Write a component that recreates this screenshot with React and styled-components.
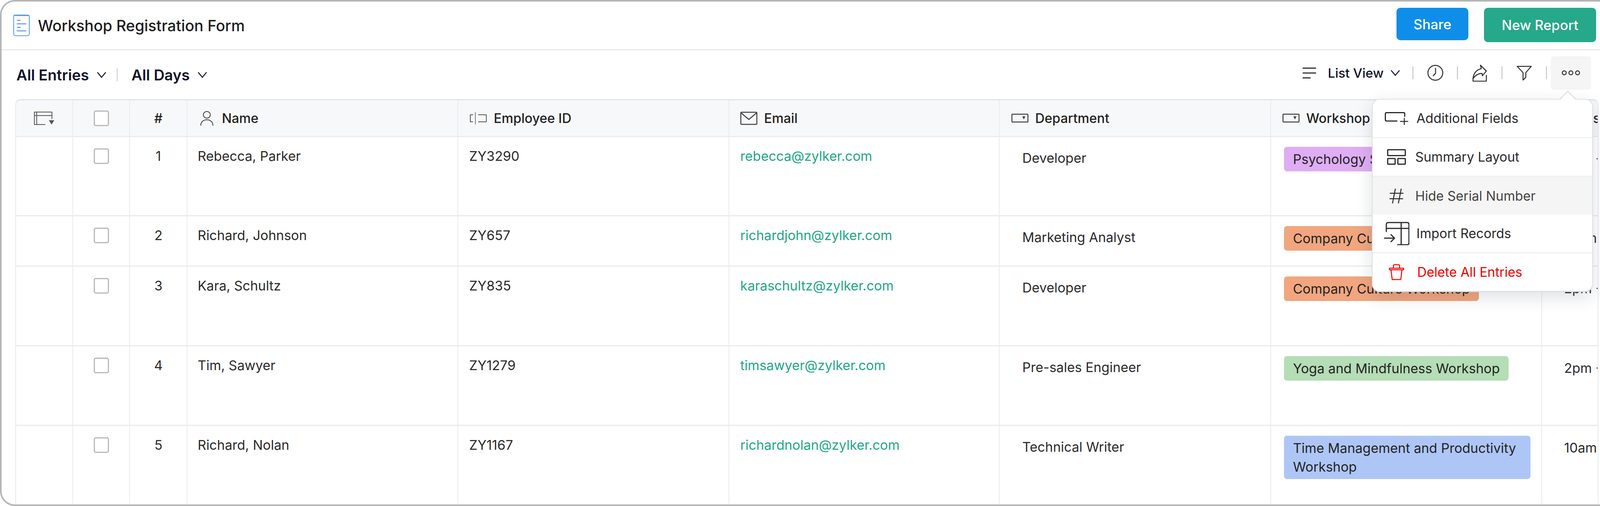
import React from 'react';
import styled, { createGlobalStyle } from 'styled-components';

const GlobalStyle = createGlobalStyle`
  html, body { margin: 0; padding: 0; background: #fff; }
  body { font-family: Inter, "Noto Sans", sans-serif; color: #2b2b2b; }
  * { box-sizing: border-box; }
`;

const Frame = styled.div`
  position: relative;
  display: flex;
  flex-direction: column;
  width: 4132px;
  height: 1296px;
  border: 4px solid #b5b5b5;
  border-radius: 38px;
  background: #fff;
  overflow: hidden;
`;

const TopBar = styled.header`
  display: flex;
  justify-content: space-between;
  flex: 0 0 125px;
  padding: 16px 42px 0 30px;
  border-bottom: 3px solid #e9eaec;
`;

const TitleGroup = styled.div`
  display: flex;
  align-items: center;
  gap: 21px;
  height: 88px;
  padding-top: 2px;
`;

const Title = styled.h1`
  margin: 0;
  font-size: 39px;
  font-weight: 500;
  color: #1e1e1e;
`;

const Actions = styled.div`
  display: flex;
  align-items: flex-start;
  gap: 40px;
`;

const Button = styled.button`
  width: ${({ $width }) => $width}px;
  height: ${({ $height }) => $height}px;
  border: 0;
  border-radius: 10px;
  background: ${({ $color }) => $color};
  color: #fff;
  font-family: inherit;
  font-size: 35px;
  font-weight: 500;
`;

const FilterBar = styled.div`
  display: flex;
  justify-content: space-between;
  align-items: center;
  flex: 0 0 125px;
  padding: 0 55px 0 38px;
`;

const FilterGroup = styled.div`
  display: flex;
  align-items: center;
  height: 34px;
`;

const FilterLabel = styled.span`
  font-size: 38px;
  font-weight: 600;
  color: #10122e;
`;

const FilterDivider = styled.span`
  width: 2px;
  height: 33px;
  margin: 0 36px 0 27px;
  background: #c9c9c9;
`;

const ChevronSvg = styled.svg`
  flex: none;
  margin-left: ${({ $gap }) => $gap}px;
`;

const ToolGroup = styled.div`
  display: flex;
  align-items: center;
  margin-bottom: 10px;
`;

const ViewPicker = styled.div`
  display: flex;
  align-items: center;
  margin-right: 32px;
`;

const ViewLabel = styled.span`
  margin-left: 29px;
  font-size: 33px;
  font-weight: 500;
  color: #10122e;
`;

const ToolSlot = styled.div`
  display: flex;
  align-items: center;
  justify-content: center;
  width: 112px;
`;

const ToolDivider = styled.span`
  flex: none;
  width: 2px;
  height: 33px;
  background: #bdbdbd;
`;

const MoreButton = styled.div`
  display: flex;
  align-items: center;
  justify-content: center;
  width: 103px;
  height: 86px;
  margin-left: 10px;
  border-radius: 8px;
  background: #f5f5f5;
`;

const Table = styled.div`
  flex: 1;
  min-height: 0;
  margin: 0 36px 0 35px;
  border: 2px solid #e7eaee;
  border-top: 3px solid #dfe3e8;
  border-bottom: 0;
  border-radius: 14px 14px 0 0;
  overflow: hidden;
`;

const Row = styled.div`
  display: grid;
  grid-template-columns: 146px 146px 147px 693px 694px 692px 695px 694px 144px;
  height: ${({ $height }) => $height}px;
  border-bottom: ${({ $last }) => ($last ? 0 : '3px solid #ebebeb')};
  background: ${({ $header }) => ($header ? '#f7f8fa' : '#fff')};
`;

const HeadCell = styled.div`
  display: flex;
  align-items: center;
  justify-content: ${({ $center }) => ($center ? 'center' : 'flex-start')};
  gap: 17px;
  min-width: 0;
  padding-left: ${({ $left }) => $left || 0}px;
  border-right: 2px solid #e9ebee;
  font-size: 33.5px;
  font-weight: 500;
  line-height: 48px;
  color: #222;
  white-space: nowrap;
  overflow: hidden;
  &:last-child { border-right: 0; }
`;

const Cell = styled.div`
  display: flex;
  justify-content: ${({ $center }) => ($center ? 'center' : 'flex-start')};
  min-width: 0;
  padding-top: ${({ $top }) => $top || 25}px;
  padding-left: ${({ $left }) => $left || 0}px;
  padding-right: ${({ $right }) => $right || 0}px;
  border-right: 2px solid #e9ebee;
  font-size: 34px;
  line-height: 48px;
  color: ${({ $color }) => $color || '#2b2b2b'};
  white-space: nowrap;
  overflow: hidden;
  &:last-child { border-right: 0; }
`;

const Checkbox = styled.span`
  width: 39px;
  height: 40px;
  border: 3px solid #b9b9b9;
  border-radius: 5px;
  background: #fff;
`;

const Tag = styled.span`
  display: inline-block;
  align-self: flex-start;
  padding: 7.5px 23px;
  border-radius: 8px;
  background: ${({ $color }) => $color};
  color: #232323;
  white-space: normal;
`;

const Menu = styled.div`
  position: absolute;
  top: 249px;
  left: 3508px;
  display: flex;
  flex-direction: column;
  width: 566px;
  height: 495px;
  border: 2px solid #dde0e5;
  border-bottom-width: 3px;
  border-radius: 20px;
  background: #fff;
  box-shadow: 0 14px 44px rgba(30, 40, 60, 0.14);
  &::before {
    content: '';
    position: absolute;
    top: -16px;
    left: 484px;
    width: 29px;
    height: 29px;
    border-top: 2px solid #d5dae2;
    border-left: 2px solid #d5dae2;
    background: #fff;
    transform: rotate(45deg);
  }
`;

const MenuItem = styled.div`
  display: flex;
  align-items: center;
  flex: 1;
  padding-left: 28px;
  border-bottom: ${({ $divider }) => ($divider ? '3px solid #f0f0f0' : 0)};
  background: ${({ $active }) => ($active ? '#f5f5f5' : 'transparent')};
  color: ${({ $color }) => $color || '#2b2b2b'};
  font-size: 33.5px;
  position: relative;
`;

const MenuIcon = styled.span`
  display: flex;
  justify-content: center;
  flex: none;
  width: 66px;
  margin-right: ${({ $gap }) => $gap}px;
`;

const Icon = ({ width, height, children, stroke = '#3a3a3a', strokeWidth = 2.5 }) => (
  <svg
    width={width}
    height={height}
    viewBox={`0 0 ${width} ${height}`}
    fill="none"
    stroke={stroke}
    strokeWidth={strokeWidth}
    strokeLinecap="round"
    strokeLinejoin="round"
    style={{ flex: 'none', display: 'block' }}
  >
    {children}
  </svg>
);

const Chevron = ({ gap, width = 24, color = '#10122e' }) => (
  <ChevronSvg $gap={gap} width={width} height="16" viewBox="0 0 24 16" fill="none" stroke={color} strokeWidth="2.6" strokeLinecap="round" strokeLinejoin="round">
    <path d="M2 2l10 12L22 2" />
  </ChevronSvg>
);

const FormIcon = () => (
  <Icon width={42} height={56} stroke="#4f9cf0" strokeWidth={2}>
    <rect x="1" y="1.5" width="40" height="53" rx="5" />
    <path d="M2 2.5h38" strokeWidth="3" />
    <path d="M10 15h8M10 33h8" stroke="#3f7fd0" />
    <path d="M10 24h22M10 42h22" stroke="#6ea6e8" strokeWidth="3" />
  </Icon>
);

const ColumnsIcon = () => (
  <Icon width={54} height={36} stroke="#555" strokeWidth={2}>
    <path d="M47 20V2H2v32h28" strokeLinecap="butt" />
    <path d="M2 11h45M8 2v32" strokeLinecap="butt" />
    <path d="M39 23h14l-7 11z" fill="#555" stroke="none" />
  </Icon>
);

const PersonIcon = () => (
  <Icon width={43} height={38} strokeWidth={2}>
    <ellipse cx="21.5" cy="10" rx="9" ry="8.5" />
    <path d="M6 37c0-19 31-19 31 0" />
  </Icon>
);

const IdIcon = () => (
  <Icon width={45} height={32} stroke="#555" strokeWidth={2}>
    <path d="M9 7H2v18h7M22 7h21v18H22" strokeLinecap="butt" />
    <path d="M15 1v30" strokeWidth="1.5" />
  </Icon>
);

const MailIcon = () => (
  <Icon width={44} height={34} stroke="#3f3f3f" strokeWidth={2.5}>
    <rect x="1.5" y="1.5" width="41" height="31" rx="2" />
    <path d="M2 3l20 17L42 3" />
  </Icon>
);

const SelectIcon = () => (
  <Icon width={44} height={23} stroke="#3f3f3f" strokeWidth={2.5}>
    <rect x="1.5" y="1.5" width="41" height="20" rx="1.5" />
    <path d="M28 7h8l-4 8z" fill="#3f3f3f" stroke="none" />
  </Icon>
);

const ListIcon = () => (
  <Icon width={36} height={30} stroke="#333" strokeWidth={3.2}>
    <path d="M2 2.5h32M2 15h32M2 27.5h18" />
  </Icon>
);

const ClockIcon = () => (
  <Icon width={41} height={41} stroke="#2f2f2f">
    <circle cx="20.5" cy="20.5" r="19" />
    <path d="M21 9v13l-6 6" />
  </Icon>
);

const ExportIcon = () => (
  <Icon width={38} height={44} stroke="#2f2f2f">
    <path d="M2 34v9h34V27" strokeLinecap="butt" />
    <path d="M21 2l15 15-10 12-1-6c-10 0-18 6-23 13 1-13 9-23 21-25z" />
  </Icon>
);

const FilterIcon = () => (
  <Icon width={40} height={38} stroke="#2f2f2f">
    <path d="M2 2h36L24 18v12l-7 7V18z" />
  </Icon>
);

const DotsIcon = () => (
  <Icon width={47} height={13} stroke="#2f2f2f">
    <circle cx="6.5" cy="6.5" r="5" />
    <circle cx="23.5" cy="6.5" r="5" />
    <circle cx="40.5" cy="6.5" r="5" />
  </Icon>
);

const AddFieldIcon = () => (
  <Icon width={60} height={33} stroke="#2b2b2b" strokeWidth={3}>
    <path d="M51 11V4q0-2.500-2.500-2.500H5Q1.500 1.500 1.500 5v14.500Q1.500 23 5 23h26" />
    <path d="M50 16v16M40 24h19" strokeWidth="2.500" />
  </Icon>
);

const SummaryIcon = () => (
  <Icon width={48} height={40} stroke="#2b2b2b" strokeWidth={3}>
    <rect x="1.500" y="1.500" width="45" height="15" rx="1" />
    <rect x="1.500" y="24" width="19" height="14.500" rx="1" />
    <rect x="27.500" y="24" width="19" height="14.500" rx="1" />
  </Icon>
);

const HashIcon = () => (
  <Icon width={36} height={38} stroke="#2b2b2b" strokeWidth={2.500}>
    <path d="M15 1L8 37M30 1l-7 36M2 12h33M1 26h33" />
  </Icon>
);

const ImportIcon = () => (
  <Icon width={65} height={60} stroke="#2b2b2b" strokeWidth={3}>
    <path d="M6 25V7q0-5 5-5h48q5 0 5 5v47q0 5-5 5H35" />
    <path d="M6 17h58M44 2v57" />
    <path d="M1 42h26M18 33l9 9-9 9" />
  </Icon>
);

const TrashIcon = () => (
  <Icon width={40} height={42} stroke="#f00000" strokeWidth={2.500}>
    <path d="M2 11h36M2 11v4h36v-4" />
    <path d="M12 10V5q0-3 3-3h10q3 0 3 3v5" />
    <path d="M6 15l3 25h22l3-25" />
  </Icon>
);

const TAG_COLORS = {
  purple: '#dfadf3',
  orange: '#f1a67f',
  green: '#b5ddb6',
  blue: '#aec6f6',
};

const rows = [
  { id: 1, height: 203, name: 'Rebecca, Parker', code: 'ZY3290', email: 'rebecca@zylker.com', dept: 'Developer', workshop: 'Psychology Seminar', tag: 'purple', time: '2pm - 4pm' },
  { id: 2, height: 129, name: 'Richard, Johnson', code: 'ZY657', email: 'richardjohn@zylker.com', dept: 'Marketing Analyst', workshop: 'Company Culture Workshop', tag: 'orange', time: '10am - 12pm' },
  { id: 3, height: 204, name: 'Kara, Schultz', code: 'ZY835', email: 'karaschultz@zylker.com', dept: 'Developer', workshop: 'Company Culture Workshop', tag: 'orange', time: '2pm - 4pm' },
  { id: 4, height: 204, name: 'Tim, Sawyer', code: 'ZY1279', email: 'timsawyer@zylker.com', dept: 'Pre-sales Engineer', workshop: 'Yoga and Mindfulness Workshop', tag: 'green', time: '2pm - 4pm' },
  { id: 5, height: 200, name: 'Richard, Nolan', code: 'ZY1167', email: 'richardnolan@zylker.com', dept: 'Technical Writer', workshop: 'Time Management and Productivity Workshop', tag: 'blue', time: '10am - 12pm' },
];

const menuItems = [
  { label: 'Additional Fields', icon: <AddFieldIcon />, gap: 18, divider: true },
  { label: 'Summary Layout', icon: <SummaryIcon />, gap: 15, divider: true },
  { label: 'Hide Serial Number', icon: <HashIcon />, gap: 15, active: true, color: '#444' },
  { label: 'Import Records', icon: <ImportIcon />, gap: 18, divider: true },
  { label: 'Delete All Entries', icon: <TrashIcon />, gap: 20, color: '#f00000' },
];

const App = () => (
  <>
    <GlobalStyle />
    <Frame>
      <TopBar>
        <TitleGroup>
          <FormIcon />
          <Title>Workshop Registration Form</Title>
        </TitleGroup>
        <Actions>
          <Button $width={184} $height={83} $color="#0f8ee9">Share</Button>
          <Button $width={287} $height={88} $color="#26a88a">New Report</Button>
        </Actions>
      </TopBar>

      <FilterBar>
        <FilterGroup>
          <FilterLabel>All Entries</FilterLabel>
          <Chevron gap={20} />
          <FilterDivider />
          <FilterLabel>All Days</FilterLabel>
          <Chevron gap={20} />
        </FilterGroup>
        <ToolGroup>
          <ViewPicker>
            <ListIcon />
            <ViewLabel>List View</ViewLabel>
            <Chevron gap={18} />
          </ViewPicker>
          <ToolDivider />
          <ToolSlot><ClockIcon /></ToolSlot>
          <ToolDivider />
          <ToolSlot><ExportIcon /></ToolSlot>
          <ToolDivider />
          <ToolSlot><FilterIcon /></ToolSlot>
          <ToolDivider />
          <MoreButton><DotsIcon /></MoreButton>
        </ToolGroup>
      </FilterBar>

      <Table>
        <Row $header $height={94}>
          <HeadCell $center><ColumnsIcon /></HeadCell>
          <HeadCell $center><Checkbox /></HeadCell>
          <HeadCell $center>#</HeadCell>
          <HeadCell $left={28}><PersonIcon />Name</HeadCell>
          <HeadCell $left={29}><IdIcon />Employee ID</HeadCell>
          <HeadCell $left={28}><MailIcon />Email</HeadCell>
          <HeadCell $left={30}><SelectIcon />Department</HeadCell>
          <HeadCell $left={29}><SelectIcon />Workshop</HeadCell>
          <HeadCell $left={28}><SelectIcon />Session</HeadCell>
        </Row>
        {rows.map((row, i) => (
          <Row key={row.id} $height={row.height} $last={i === rows.length - 1}>
            <Cell />
            <Cell $center $top={29}><Checkbox /></Cell>
            <Cell $center>{row.id}</Cell>
            <Cell $left={26}>{row.name}</Cell>
            <Cell $left={28}>{row.code}</Cell>
            <Cell $left={28} $color="#22a886">{row.email}</Cell>
            <Cell $left={58} $top={30}>{row.dept}</Cell>
            <Cell $left={33} $right={28}>
              <Tag $color={TAG_COLORS[row.tag]}>{row.workshop}</Tag>
            </Cell>
            <Cell $left={56} $top={32}>{row.time}</Cell>
          </Row>
        ))}
      </Table>

      <Menu>
        {menuItems.map((item) => (
          <MenuItem key={item.label} $divider={item.divider} $active={item.active} $color={item.color}>
            <MenuIcon $gap={item.gap}>{item.icon}</MenuIcon>
            {item.label}
          </MenuItem>
        ))}
      </Menu>
    </Frame>
  </>
);

export default App;
